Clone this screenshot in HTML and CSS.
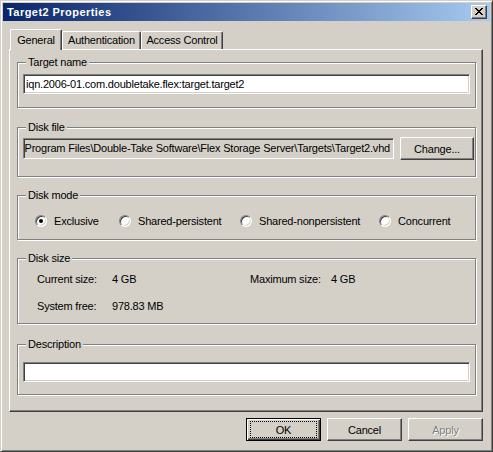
FILE: index.html
```html
<!DOCTYPE html>
<html>
<head>
<meta charset="utf-8">
<title>Target2 Properties</title>
<link rel="stylesheet" href="styles.css">
</head>
<body>
<div class="window">
  <div class="titlebar">
    <span class="title">Target2 Properties</span>
    <span class="close-btn"><svg class="close-glyph" width="8" height="7" viewBox="0 0 8 7" shape-rendering="crispEdges"><path d="M0 0h2v1H0z M6 0h2v1H6z M1 1h2v1H1z M5 1h2v1H5z M2 2h4v1H2z M3 3h2v1H3z M2 4h4v1H2z M1 5h2v1H1z M5 5h2v1H5z M0 6h2v1H0z M6 6h2v1H6z" fill="#000"/></svg></span>
  </div>
  <div class="content">
    <div class="tabstrip">
      <div class="tab tab-active tab-general">General</div>
      <div class="tab tab-auth">Authentication</div>
      <div class="tab tab-access">Access Control</div>
    </div>
    <div class="panel">
      <div class="group g-target">
        <div class="group-title">Target name</div>
        <div class="textbox tb-target">iqn.2006-01.com.doubletake.flex:target.target2</div>
      </div>
      <div class="group g-file">
        <div class="group-title">Disk file</div>
        <div class="file-row">
          <div class="textbox tb-file"><div class="tb-clip"><span>C:\Program Files\Double-Take Software\Flex Storage Server\Targets\Target2.vhd</span></div></div>
          <div class="btn btn-change">Change...</div>
        </div>
      </div>
      <div class="group g-mode">
        <div class="group-title">Disk mode</div>
        <div class="radio-row">
          <div class="radio-item ri-1"><span class="radio checked"></span><span class="radio-label">Exclusive</span></div>
          <div class="radio-item ri-2"><span class="radio"></span><span class="radio-label">Shared-persistent</span></div>
          <div class="radio-item ri-3"><span class="radio"></span><span class="radio-label">Shared-nonpersistent</span></div>
          <div class="radio-item ri-4"><span class="radio"></span><span class="radio-label">Concurrent</span></div>
        </div>
      </div>
      <div class="group g-size">
        <div class="group-title">Disk size</div>
        <div class="size-grid">
          <span>Current size:</span><span>4 GB</span><span>Maximum size:</span><span>4 GB</span>
          <span class="row2">System free:</span><span class="row2">978.83 MB</span>
        </div>
      </div>
      <div class="group g-desc">
        <div class="group-title">Description</div>
        <div class="textbox tb-desc"></div>
      </div>
    </div>
    <div class="buttons">
      <div class="btn btn-default"><span class="focus-rect">OK</span></div>
      <div class="btn">Cancel</div>
      <div class="btn btn-disabled">Apply</div>
    </div>
  </div>
</div>
</body>
</html>
```
FILE: styles.css
```css
* { box-sizing: border-box; }
html, body { margin: 0; padding: 0; }
body {
  width: 493px;
  height: 452px;
  overflow: hidden;
  background: #D4D0C8;
  font-family: "Liberation Sans", Arial, sans-serif;
  font-size: 11px;
  letter-spacing: -0.2px;
  color: #000;
}
.window {
  width: 493px;
  height: 452px;
  background: #D4D0C8;
  border: 1px solid;
  border-color: #D4D0C8 #404040 #404040 #D4D0C8;
  box-shadow: inset 1px 1px 0 #fff, inset -1px -1px 0 #808080;
  padding: 2px;
  display: flex;
  flex-direction: column;
}
.titlebar {
  height: 18px;
  flex: none;
  display: flex;
  align-items: center;
  justify-content: space-between;
  padding: 0 3px 0 4px;
  background: linear-gradient(to right, #0A246A, #A6CAF0);
  color: #fff;
}
.title {
  font-weight: bold;
  letter-spacing: 0.45px;
  line-height: 14px;
}
.close-btn {
  width: 16px;
  height: 14px;
  background: #D4D0C8;
  border: 1px solid;
  border-color: #fff #404040 #404040 #fff;
  box-shadow: inset -1px -1px 0 #808080;
  display: flex;
  padding: 2px 0 0 3px;
}
.close-glyph { display: block; }
.content {
  padding: 8px 7px 0 6px;
  display: flex;
  flex-direction: column;
}
.tabstrip {
  height: 20px;
  display: flex;
  align-items: flex-start;
  padding-left: 1px;
}
.tab {
  height: 18px;
  margin-top: 2px;
  line-height: 16px;
  text-align: center;
  background: #D4D0C8;
  border-top: 1px solid #fff;
  border-left: 1px solid #fff;
  border-right: 1px solid #404040;
  box-shadow: inset -1px 0 0 #808080;
  border-radius: 2px 2px 0 0;
  white-space: nowrap;
}
.tab-active {
  margin-top: 0;
  height: 21px;
  padding-top: 2px;
  position: relative;
  z-index: 1;
}
.tab-general { width: 52px; }
.tab-auth { width: 79px; }
.tab-access { width: 82px; }
.panel {
  height: 363px;
  border: 1px solid;
  border-color: #fff #404040 #404040 #fff;
  box-shadow: inset -1px -1px 0 #808080;
  padding: 12px 6px 0 7px;
  display: flex;
  flex-direction: column;
}
.group {
  border: 1px solid #808080;
  box-shadow: inset 1px 1px 0 #fff, 1px 1px 0 #fff;
  padding: 0 5px;
}
.group-title {
  width: max-content;
  margin: -7px 0 0 3px;
  padding: 0 2px;
  line-height: 13px;
  background: #D4D0C8;
  position: relative;
}
.textbox {
  height: 20px;
  border: 1px solid;
  border-color: #808080 #fff #fff #808080;
  box-shadow: inset 1px 1px 0 #404040, inset -1px -1px 0 #D4D0C8;
  background: #fff;
  padding: 0 2px;
  line-height: 18px;
  white-space: nowrap;
  overflow: hidden;
}
.g-target { padding-bottom: 13px; }
.tb-target { margin-top: 5px; }
.g-file { margin-top: 19px; padding-bottom: 16px; }
.file-row {
  margin-top: 3px;
  height: 23px;
  display: flex;
  align-items: center;
  margin-right: -4px;
}
.tb-file {
  width: 371px;
  height: 21px;
  line-height: 19px;
  background: #D4D0C8;
  padding: 0 3px 0 1px;
  display: flex;
}
.tb-clip {
  flex: 1;
  overflow: hidden;
  display: flex;
  justify-content: flex-end;
}
.tb-clip span { flex: none; }
.btn {
  width: 75px;
  height: 23px;
  flex: none;
  background: #D4D0C8;
  border: 1px solid;
  border-color: #fff #404040 #404040 #fff;
  box-shadow: inset -1px -1px 0 #808080;
  display: flex;
  align-items: center;
  justify-content: center;
  white-space: nowrap;
}
.btn-change { width: 74px; margin-left: 6px; }
.g-mode { margin-top: 18px; padding-bottom: 11px; }
.radio-row {
  margin-top: 12px;
  height: 14px;
  display: flex;
  align-items: center;
  padding-left: 12px;
}
.radio-item {
  display: flex;
  align-items: center;
  flex: none;
}
.ri-1 { width: 84px; }
.ri-2 { width: 121px; }
.ri-3 { width: 139px; }
.radio {
  width: 12px;
  height: 12px;
  flex: none;
  border-radius: 50%;
  border: 1px solid;
  border-color: #808080 #fff #fff #808080;
  background: #fff;
  box-shadow: inset 1px 1px 0 #404040, inset -1px -1px 0 #D4D0C8;
  position: relative;
}
.radio.checked::after {
  content: "";
  position: absolute;
  left: 3px;
  top: 3px;
  width: 4px;
  height: 4px;
  border-radius: 50%;
  background: #000;
}
.radio-label { margin-left: 7px; line-height: 13px; }
.g-size { margin-top: 18px; padding-bottom: 10px; }
.size-grid {
  margin-top: 8px;
  padding-left: 14px;
  display: grid;
  grid-template-columns: 75px 138px 81px auto;
  grid-auto-rows: 13px;
  row-gap: 14px;
  line-height: 13px;
}
.g-desc { margin-top: 20px; padding-bottom: 12px; }
.tb-desc { margin-top: 11px; }
.buttons {
  margin-top: 6px;
  display: flex;
  justify-content: flex-end;
  gap: 6px;
}
.btn-default {
  border: 1px solid #000;
  box-shadow: inset 1px 1px 0 #fff, inset -1px -1px 0 #404040, inset -2px -2px 0 #808080;
  padding: 2px 3px 2px 3px;
}
.focus-rect {
  flex: 1;
  align-self: stretch;
  border: 1px dotted #000;
  display: flex;
  align-items: center;
  justify-content: center;
}
.btn-disabled {
  color: #808080;
  text-shadow: 1px 1px 0 #fff;
}
```
